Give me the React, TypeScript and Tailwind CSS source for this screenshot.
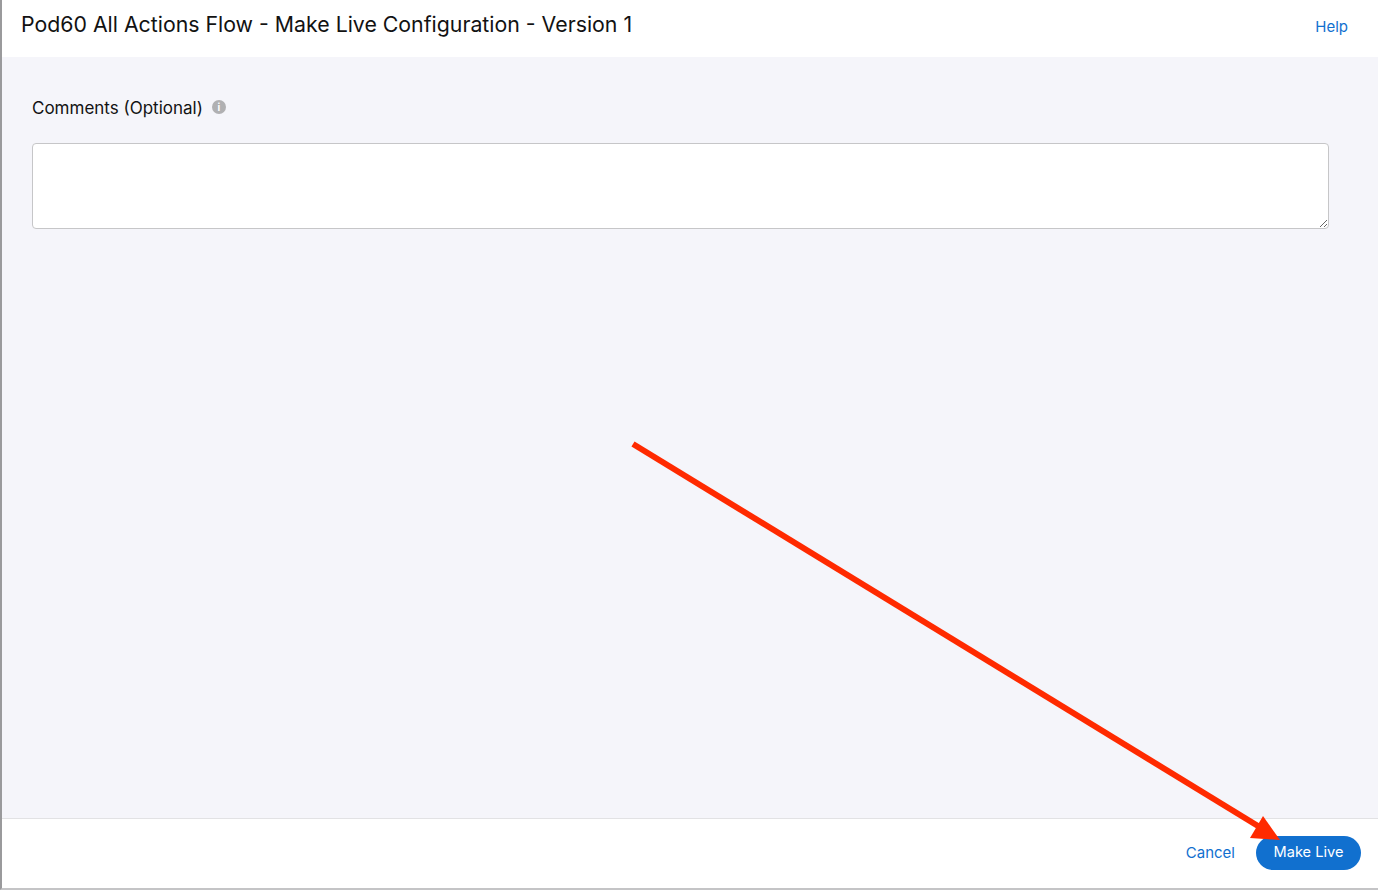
import React from "react";

export default function App() {
  return (
    <div className="relative h-[890px] w-[1378px] overflow-hidden bg-white font-['Inter','Liberation_Sans',sans-serif]">
      <div className="flex h-full flex-col border-b-2 border-l-2 border-b-[#c4c4c6] border-l-[#9a9a9c]">
        <header className="flex h-[57px] shrink-0 items-start justify-between bg-white pl-[19px] pr-[30px]">
          <h1 className="mt-[9px] text-[21.3px] leading-[30px] font-normal text-[#121212]">
            Pod60 All Actions Flow - Make Live Configuration - Version 1
          </h1>
          <a className="mt-[17px] text-[15px] leading-5 text-[#1170cf]">Help</a>
        </header>
        <main className="flex flex-1 flex-col bg-[#f5f5fa] pl-[30px] pr-[49px] pt-[39px]">
          <div className="flex h-[23px] items-start gap-[9px]">
            <label className="mt-[1px] text-[17px] leading-[23px] text-[#121212]">Comments (Optional)</label>
            <span className="mt-[4px] flex h-[14px] w-[14px] items-center justify-center rounded-full bg-[#b0b0b2] text-[10px] font-bold leading-none text-white">
              i
            </span>
          </div>
          <textarea className="mt-[24px] h-[86px] w-full rounded-[4px] border border-[#c6c6c8] bg-white" />
        </main>
        <footer className="flex h-[70px] shrink-0 items-center justify-end gap-[21px] border-t border-[#e2e2e4] bg-white pb-[2px] pr-[17px]">
          <a className="text-[15px] leading-5 text-[#1170cf]">Cancel</a>
          <button className="h-[34px] w-[105px] rounded-full bg-[#1170cf] pt-[1px] text-[14.6px] text-white">Make Live</button>
        </footer>
      </div>
      <svg className="pointer-events-none absolute left-0 top-0" width="1378" height="890" viewBox="0 0 1378 890">
        <line x1="633" y1="444" x2="1258" y2="826" stroke="#ff2a00" strokeWidth="6" />
        <polygon points="1263,816 1250,838 1280,840" fill="#ff2a00" />
      </svg>
    </div>
  );
}
